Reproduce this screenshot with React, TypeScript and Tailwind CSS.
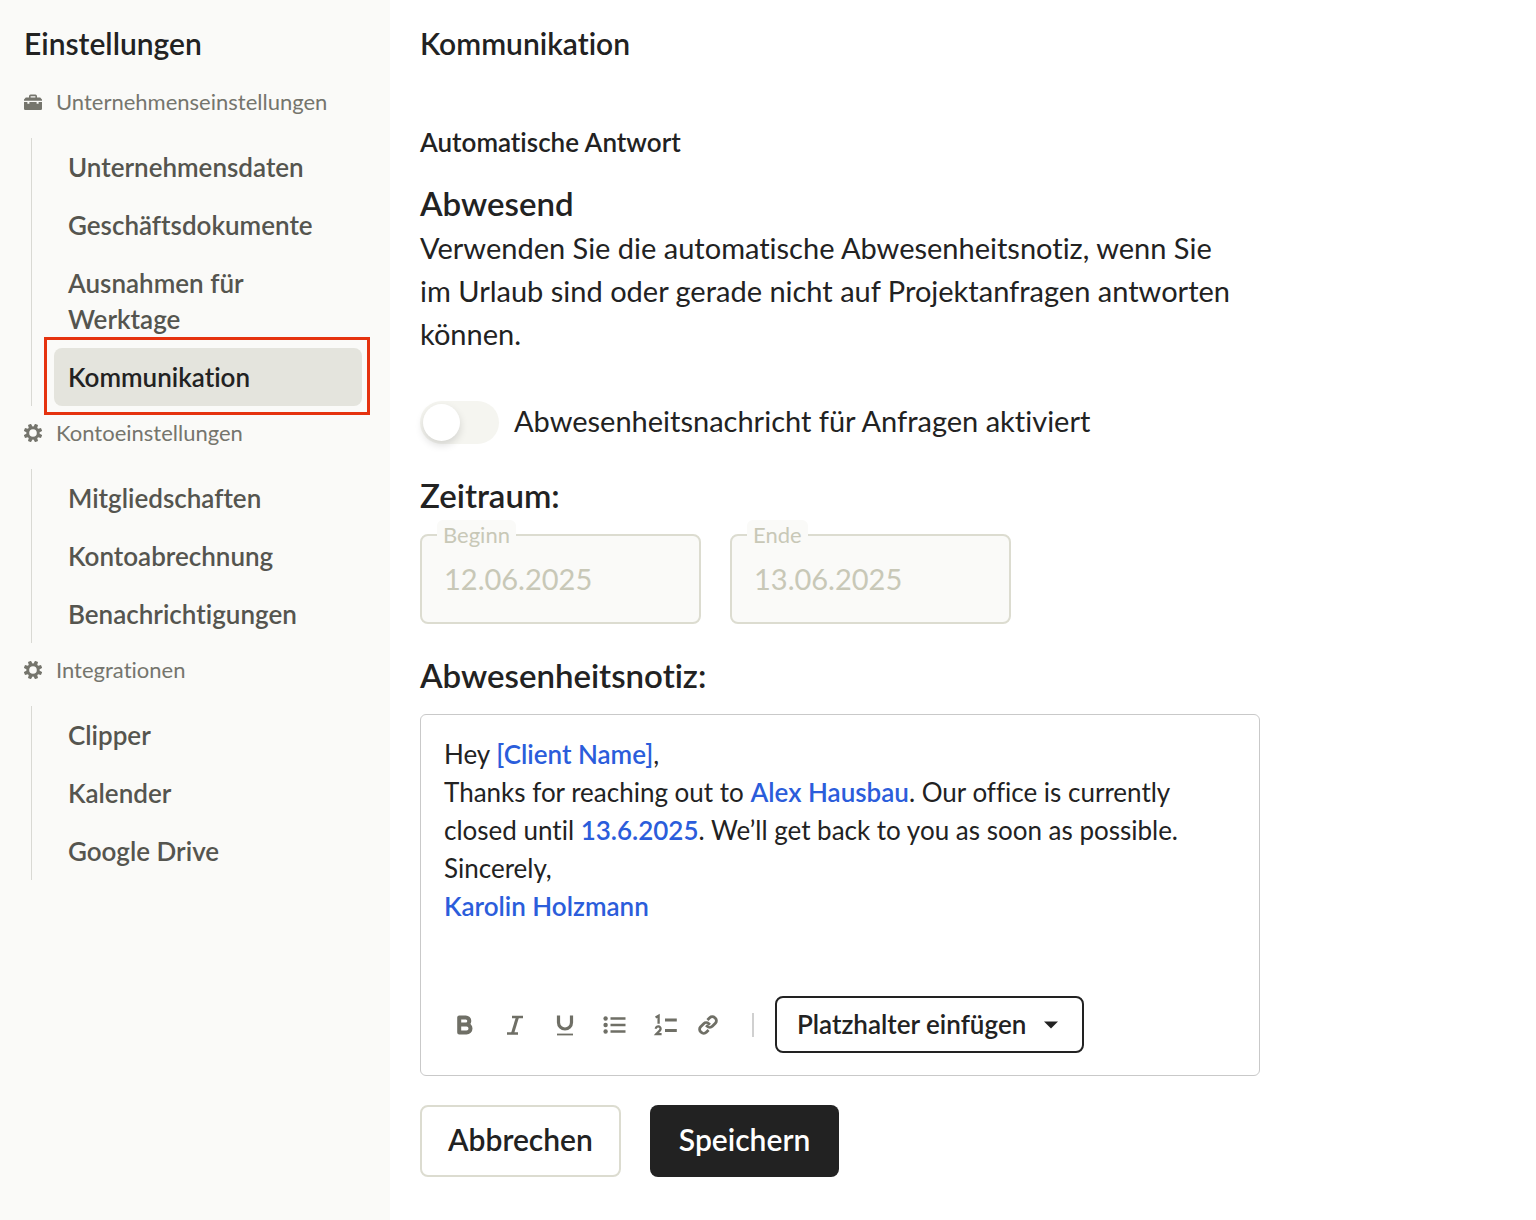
import React, { useState } from "react";

type NavGroup = {
  title: string;
  icon: "toolbox" | "gear";
  items: string[];
};

const groups: NavGroup[] = [
  {
    title: "Unternehmenseinstellungen",
    icon: "toolbox",
    items: ["Unternehmensdaten", "Geschäftsdokumente", "Ausnahmen für Werktage", "Kommunikation"],
  },
  {
    title: "Kontoeinstellungen",
    icon: "gear",
    items: ["Mitgliedschaften", "Kontoabrechnung", "Benachrichtigungen"],
  },
  {
    title: "Integrationen",
    icon: "gear",
    items: ["Clipper", "Kalender", "Google Drive"],
  },
];

function ToolboxIcon() {
  return (
    <svg viewBox="0 0 18 18" className="size-[18px] shrink-0" fill="currentColor" aria-hidden="true">
      <path
        fillRule="evenodd"
        d="M5 4.5V3.2Q5 1.6 6.6 1.6h4.8Q13 1.6 13 3.2v1.3h3.2L18 6.6v1.2H0V6.6L1.8 4.5zM6.6 4.5h4.8V3.2H6.6z"
      />
      <path d="M0 9h3.4v1.800h2V9h7.200v1.800h2V9H18v6.800q0 1.200-1.200 1.200H1.200Q0 17 0 15.800z" />
    </svg>
  );
}

function GearIcon() {
  const angles = [22.5, 67.5, 112.5, 157.5, 202.5, 247.5, 292.5, 337.5];
  return (
    <svg viewBox="0 0 18 18" className="size-[18px] shrink-0" fill="none" stroke="currentColor" aria-hidden="true">
      <circle cx="9" cy="9" r="5.200" strokeWidth="2.800" />
      {angles.map((a) => (
        <path key={a} d="M6.900 3.600L7.400-.3h3.200l.5 3.900z" fill="currentColor" stroke="none" transform={`rotate(${a} 9 9)`} />
      ))}
    </svg>
  );
}

function BoldIcon() {
  return (
    <svg viewBox="0 0 24 24" className="size-6" fill="none" stroke="currentColor" strokeWidth="4" strokeLinejoin="round" aria-hidden="true">
      <path d="M6.200 4.500h6.600a3.500 3.500 0 0 1 0 7H6.200zM6.200 11.500h7.300a4 4 0 0 1 0 8H6.200z" />
    </svg>
  );
}

function ItalicIcon() {
  return (
    <svg viewBox="0 0 24 24" className="size-6" fill="none" stroke="currentColor" aria-hidden="true">
      <path d="M9 4h11M4 20.500h11" strokeWidth="2.600" />
      <path d="M14.500 4l-5 16.500" strokeWidth="3" />
    </svg>
  );
}

function UnderlineIcon() {
  return (
    <svg viewBox="0 0 24 24" className="size-6" fill="none" stroke="currentColor" aria-hidden="true">
      <path d="M5.500 2.500v7a6.500 6.500 0 0 0 13 0v-7" strokeWidth="3.200" />
      <path d="M4 21.500h16" strokeWidth="1.800" />
    </svg>
  );
}

function BulletListIcon() {
  return (
    <svg viewBox="0 0 24 24" className="size-6" fill="currentColor" aria-hidden="true">
      <circle cx="2.600" cy="5.500" r="2.200" />
      <circle cx="2.600" cy="12" r="2.200" />
      <circle cx="2.600" cy="18.500" r="2.200" />
      <path d="M7.500 5.500h15M7.500 12h15M7.500 18.500h15" stroke="currentColor" strokeWidth="2.600" />
    </svg>
  );
}

function NumberedListIcon() {
  return (
    <svg viewBox="0 0 24 24" className="size-6" fill="none" stroke="currentColor" aria-hidden="true">
      <path d="M2.600 4.600L5.600 2.800v8" strokeWidth="2.300" />
      <path d="M2.800 15.800c.2-3.400 5.200-2.900 4.800.2-.2 1.500-2.500 3-4.300 5.100h5.300" strokeWidth="2.300" />
      <path d="M12 7h11.800M12 17.500h11.800" strokeWidth="2.800" />
    </svg>
  );
}

function LinkIcon() {
  return (
    <svg viewBox="0 0 24 24" className="size-6" fill="none" stroke="currentColor" strokeWidth="2.800" aria-hidden="true">
      <g transform="rotate(-45 12 12)">
        <path d="M8.800 16H5.600a3.600 3.600 0 0 1-3.600-3.600v-.8A3.600 3.600 0 0 1 5.600 8h4.300a3.600 3.600 0 0 1 3.600 3.600v1.600" />
        <path d="M15.200 8h3.200a3.600 3.600 0 0 1 3.600 3.600v.8a3.600 3.600 0 0 1-3.600 3.600h-4.300a3.600 3.600 0 0 1-3.600-3.600v-1.600" />
      </g>
    </svg>
  );
}

function Sidebar({ active }: { active: string }) {
  return (
    <aside className="w-[390px] shrink-0 bg-[#fafaf8] pt-[25px] pb-8">
      <h1 className="mb-[14px] pl-6 text-[30px] leading-9 font-semibold text-[#222]">Einstellungen</h1>
      <nav aria-label="Einstellungen">
        {groups.map((group) => (
          <section key={group.title}>
            <h2 className="flex items-center gap-[14px] pt-[10px] pb-[19px] pl-6 text-[22px] leading-[34px] text-[#75756d]">
              {group.icon === "toolbox" ? <ToolboxIcon /> : <GearIcon />}
              {group.title}
            </h2>
            <ul className="mr-7 ml-[31px] border-l border-[#d9d9d4] pl-[22px]">
              {group.items.map((item) => (
                <li key={item} className="relative">
                  <a
                    href="#"
                    aria-current={item === active ? "page" : undefined}
                    className={
                      item === active
                        ? "block rounded-lg bg-[#e4e4dd] px-[14px] py-[11px] text-[26px] leading-9 font-semibold text-[#222]"
                        : "block rounded-lg px-[14px] py-[11px] text-[26px] leading-9 font-semibold text-[#55554f]"
                    }
                  >
                    {item}
                  </a>
                  {item === active && (
                    <span className="pointer-events-none absolute -top-[11px] -right-2 -bottom-[9px] -left-[10px] border-3 border-[#e5320f]" />
                  )}
                </li>
              ))}
            </ul>
          </section>
        ))}
      </nav>
    </aside>
  );
}

function DateField({ id, label, value }: { id: string; label: string; value: string }) {
  return (
    <div className="relative w-[281px]">
      <input
        id={id}
        type="text"
        disabled
        value={value}
        className="block h-[90px] w-full rounded-lg border-2 border-[#dcdcd0] bg-[#fafaf8] px-[22px] pb-[2px] text-[29px] text-[#c8c8b7]"
      />
      <label
        htmlFor={id}
        className="absolute -top-[14px] left-[17px] rounded-md bg-[#fafaf8] px-[6px] text-[22px] leading-[30px] text-[#c8c8b7]"
      >
        {label}
      </label>
    </div>
  );
}

const tools = [
  { label: "Fett", Icon: BoldIcon },
  { label: "Kursiv", Icon: ItalicIcon },
  { label: "Unterstrichen", Icon: UnderlineIcon },
  { label: "Aufzählung", Icon: BulletListIcon },
  { label: "Nummerierte Liste", Icon: NumberedListIcon },
];

function Placeholder({ children }: { children: React.ReactNode }) {
  return <strong className="font-semibold text-[#2b5ddb]">{children}</strong>;
}

function Editor() {
  return (
    <div className="mt-[19px] rounded-md border border-[#c9c9c9] px-[23px] pt-5 pb-[22px]">
      <div
        role="textbox"
        aria-multiline="true"
        aria-labelledby="note-heading"
        contentEditable
        suppressContentEditableWarning
        className="min-h-[261px] text-[26px] leading-[38px] outline-none"
      >
        <p>
          Hey <Placeholder>[Client Name]</Placeholder>,
        </p>
        <p>
          Thanks for reaching out to <Placeholder>Alex Hausbau</Placeholder>. Our office is currently closed until{" "}
          <Placeholder>13.6.2025</Placeholder>. We’ll get back to you as soon as possible.
        </p>
        <p>Sincerely,</p>
        <p>
          <Placeholder>Karolin Holzmann</Placeholder>
        </p>
      </div>
      <div className="flex items-center text-[#6f6f66]">
        <div className="flex gap-[26px] pl-[9px]">
          {tools.map(({ label, Icon }) => (
            <button key={label} type="button" aria-label={label}>
              <Icon />
            </button>
          ))}
        </div>
        <button type="button" aria-label="Link" className="ml-[19px]">
          <LinkIcon />
        </button>
        <span className="mr-[21px] ml-8 h-6 w-[2px] bg-[#d0d0d0]" />
        <button
          type="button"
          className="flex h-[57px] items-center gap-[18px] rounded-lg border-2 border-[#222] pr-6 pl-5 text-[26px] font-semibold text-[#222]"
        >
          Platzhalter einfügen
          <svg viewBox="0 0 14 8" className="h-2 w-[14px]" fill="currentColor" aria-hidden="true">
            <path d="M0 .5h14L7 7.500z" />
          </svg>
        </button>
      </div>
    </div>
  );
}

export default function App() {
  const [enabled, setEnabled] = useState(false);
  return (
    <div className="flex min-h-screen bg-white font-['Lato',sans-serif] text-[#222] [font-variant-ligatures:no-common-ligatures]">
      <Sidebar active="Kommunikation" />
      <main className="min-w-0 flex-1 px-[30px] pt-[25px] pb-8">
        <div className="max-w-[840px]">
          <h1 className="text-[30px] leading-9 font-semibold">Kommunikation</h1>
          <h2 className="mt-[65px] text-[26px] leading-8 font-semibold">Automatische Antwort</h2>
          <h3 className="mt-[25px] text-[33px] leading-10 font-semibold">Abwesend</h3>
          <p className="mt-[3px] pr-4 text-[29px] leading-[43px]">
            Verwenden Sie die automatische Abwesenheitsnotiz, wenn Sie im Urlaub sind oder gerade nicht auf
            Projektanfragen antworten können.
          </p>
          <label className="mt-[46px] flex items-start gap-[15px] text-[29px] leading-10">
            <input
              type="checkbox"
              role="switch"
              checked={enabled}
              onChange={(e) => setEnabled(e.target.checked)}
              className="h-[43px] w-[79px] appearance-none rounded-full bg-[#f5f5f0] p-[3px] before:block before:size-[37px] before:rounded-full before:bg-white before:shadow-[0_4px_8px_rgba(0,0,0,0.14)] checked:bg-[#222] checked:before:ml-9"
            />
            Abwesenheitsnachricht für Anfragen aktiviert
          </label>
          <h3 className="mt-[31px] text-[33px] leading-10 font-semibold">Zeitraum:</h3>
          <div className="mt-[19px] flex gap-[29px]">
            <DateField id="start" label="Beginn" value="12.06.2025" />
            <DateField id="end" label="Ende" value="13.06.2025" />
          </div>
          <h3 id="note-heading" className="mt-[31px] text-[33px] leading-10 font-semibold">
            Abwesenheitsnotiz:
          </h3>
          <Editor />
          <div className="mt-[29px] flex gap-[29px] text-[30px] font-semibold">
            <button type="button" className="h-[72px] rounded-lg border-2 border-[#dcdcd0] px-[26px] pb-1">
              Abbrechen
            </button>
            <button type="button" className="h-[72px] rounded-lg bg-[#222] px-[29px] pb-1 text-white">
              Speichern
            </button>
          </div>
        </div>
      </main>
    </div>
  );
}
